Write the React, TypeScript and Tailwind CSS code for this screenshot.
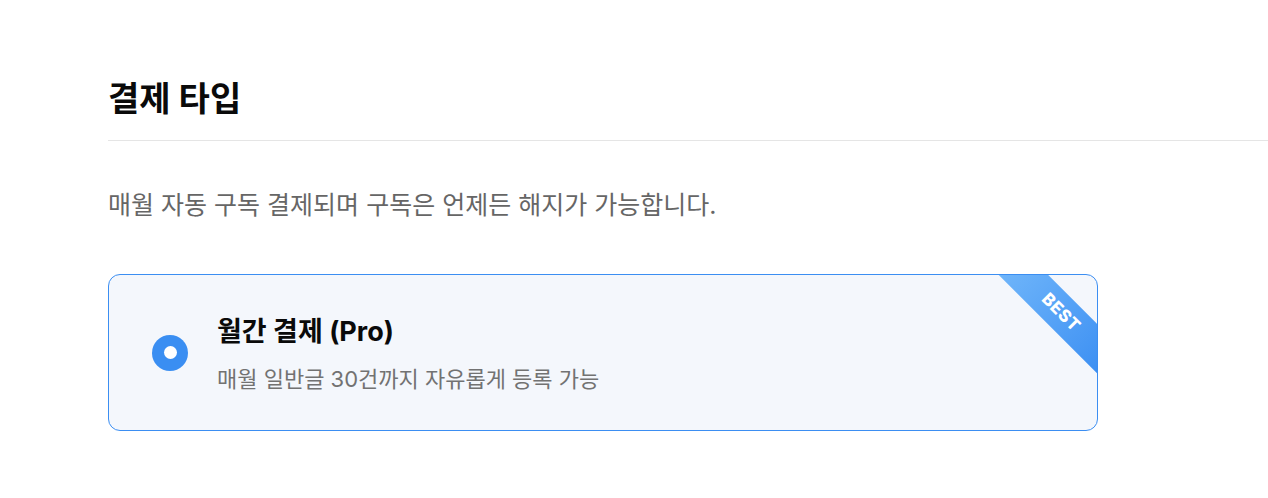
export default function App() {
  return (
    <div
      className="min-h-[498px] w-full bg-white pl-[108px] pt-[77px]"
      style={{ fontFamily: 'Inter, "Noto Sans CJK KR", sans-serif' }}
    >
      <h2 className="pb-[19px] text-[34px] font-bold leading-[44px] text-[#0a0a0a]">결제 타입</h2>
      <div className="h-px w-full bg-[#e5e5e5]" />

      <p className="mt-[47px] text-[25px] leading-[34px] text-[#666]">
        매월 자동 구독 결제되며 구독은 언제든 해지가 가능합니다.
      </p>

      <div className="relative mt-[52px] flex h-[157px] w-[990px] items-center overflow-hidden rounded-[12px] border border-[#3b8ef2] bg-[#f4f7fc]">
        <div className="ml-[43px] flex h-[36px] w-[36px] items-center justify-center rounded-full bg-[#3a8ef2]">
          <div className="h-[13px] w-[13px] rounded-full bg-white" />
        </div>
        <div className="ml-[29px] flex flex-col pt-[2px]">
          <div className="text-[27px] font-bold leading-[36px] text-[#0a0a0a]">월간 결제 (Pro)</div>
          <div className="mt-[14px] text-[22px] leading-[30px] text-[#727272]">
            매월 일반글 30건까지 자유롭게 등록 가능
          </div>
        </div>

        <div className="absolute left-[877px] top-[20px] flex h-[35px] w-[150px] rotate-45 items-center justify-center bg-gradient-to-r from-[#70b6fa] to-[#3a8ef2]">
          <span className="text-[17px] font-extrabold tracking-[0.5px] text-white">BEST</span>
        </div>
      </div>
    </div>
  );
}
